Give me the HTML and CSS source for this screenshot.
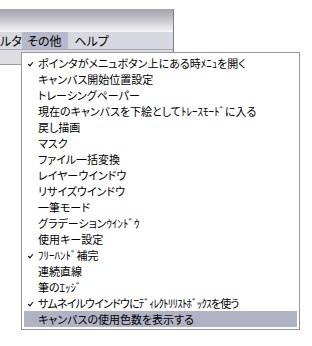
FILE: index.html
```html
<!DOCTYPE html>
<html lang="ja">
<head>
    <meta charset="UTF-8">
    <title>その他メニュー</title>
    <link rel="stylesheet" href="styles.css">
</head>
<body>
    <div class="window">
        <div class="titlebar"></div>
        <div class="menubar">
            <span class="mb-item cut">ルタ</span>
            <span class="mb-item active">その他</span>
            <span class="mb-item">ヘルプ</span>
        </div>
        <div class="toolbar"></div>
    </div>

    <ul class="menu">
        <li class="checked">ポインタがメニュボタン上にある時ﾒﾆｭを開く</li>
        <li>キャンバス開始位置設定</li>
        <li>トレーシングペーパー</li>
        <li>現在のキャンバスを下絵としてﾄﾚｰｽﾓｰﾄﾞに入る</li>
        <li>戻し描画</li>
        <li>マスク</li>
        <li>ファイル一括変換</li>
        <li>レイヤーウインドウ</li>
        <li>リサイズウインドウ</li>
        <li>一筆モード</li>
        <li>グラデーションｳｲﾝﾄﾞｳ</li>
        <li>使用キー設定</li>
        <li class="checked">ﾌﾘｰﾊﾝﾄﾞ補完</li>
        <li>連続直線</li>
        <li>筆のｴｯｼﾞ</li>
        <li class="checked tight">サムネイルウインドウにﾃﾞｨﾚｸﾄﾘﾘｽﾄﾎﾞｯｸｽを使う</li>
        <li class="hover">キャンバスの使用色数を表示する</li>
    </ul>
</body>
</html>
```

FILE: styles.css
```css
body {
    margin: 0;
    background: #fff;
    font-family: "Noto Sans CJK JP", sans-serif;
    color: #000;
}
.window {
    margin-top: 9px;
    width: 173px;
    border-right: 1px solid #7c7c94;
}
.titlebar {
    height: 23px;
    background: linear-gradient(#a2a2aa, #c4c4cc 45%, #ececf0 90%, #f8f8fa);
}
.menubar {
    display: flex;
    height: 17px;
    background: #d8d8e0;
    border-bottom: 1px solid #a8a8b4;
    font-size: 12px;
    line-height: 17px;
}
.mb-item {
    padding: 0 6px;
    font-feature-settings: "palt";
}
.mb-item.cut {
    width: 22px;
    padding: 0;
}
.mb-item.active {
    background: #b6b9c9;
    padding: 0 7px 0 5px;
}
.toolbar {
    height: 14px;
    background: #dcdce2;
    border-bottom: 1px solid #9a9aa8;
}
.menu {
    position: absolute;
    left: 21px;
    top: 52px;
    width: 273px;
    margin: 0;
    padding: 2px;
    list-style: none;
    background: #fff;
    border: 1px solid #989898;
    font-size: 11px;
    font-feature-settings: "palt";
}
.menu li {
    position: relative;
    height: 16px;
    line-height: 16px;
    padding-left: 14px;
    white-space: nowrap;
}
.menu li.tight {
    letter-spacing: -0.8px;
}
.menu li.checked::before {
    content: "";
    position: absolute;
    left: 5px;
    top: 6px;
    width: 2px;
    height: 4px;
    border: solid #000;
    border-width: 0 1.5px 1.5px 0;
    transform: rotate(40deg);
}
.menu li.hover {
    background: #b0b3c4;
}
```
